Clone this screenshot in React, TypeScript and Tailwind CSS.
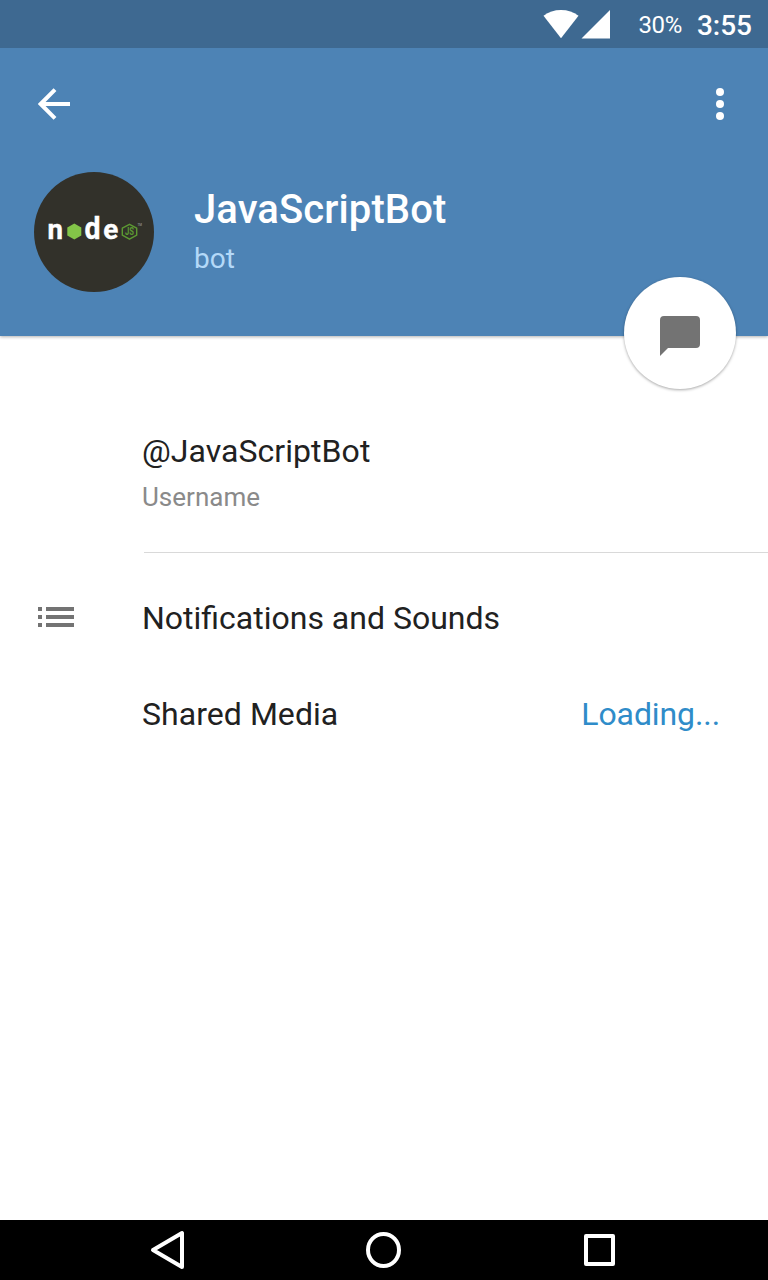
import React from "react";

function StatusBar() {
  return (
    <div className="relative z-10 flex h-12 items-center justify-end bg-[#3e6991] pr-4 text-white">
      <svg width="68" height="30" viewBox="0 0 68 30" className="mr-[28px]" fill="#fff">
        <path d="M0.5 6.800C5.500 2.800 11.300 1 18 1s12.500 1.800 17.500 5.800L18 29.300z" />
        <path d="M67 1v28.500H38.500z" />
      </svg>
      <span className="mr-[15px] mt-0.5 h-8 text-[24px] leading-8 tracking-[-0.4px]">30%</span>
      <span className="mt-1 h-8 text-[28px] font-medium leading-8">3:55</span>
    </div>
  );
}

function NodeLogo() {
  return (
    <svg width="120" height="120" viewBox="0 0 120 120" className="shrink-0">
      <circle cx="60" cy="60" r="60" fill="#32312a" />
      <g fill="#fff" stroke="#fff" strokeWidth="0.4" fontFamily="Roboto, sans-serif" fontWeight="700">
        <text x="13.600" y="66.800" fontSize="28" textLength="15.500" lengthAdjust="spacingAndGlyphs">n</text>
        <text x="50.500" y="67" fontSize="31" textLength="16" lengthAdjust="spacingAndGlyphs">d</text>
        <text x="69.300" y="66.800" fontSize="28" textLength="15" lengthAdjust="spacingAndGlyphs">e</text>
      </g>
      <path d="M40.300 51.500l7 4v8l-7 4-7-4v-8z" fill="#83c548" />
      <path d="M95.500 52.300l7.200 3.900v7l-7.200 4-7.200-4v-7z" fill="none" stroke="#5c9a32" strokeWidth="1.400" strokeLinejoin="round" />
      <text x="91" y="63.200" fontSize="10" fontWeight="700" fontFamily="Roboto, sans-serif" fill="#5c9a32" textLength="9" lengthAdjust="spacingAndGlyphs">JS</text>
      <text x="103.500" y="54" fontSize="3" fontFamily="Roboto, sans-serif" fill="#aaa">TM</text>
    </svg>
  );
}

function ProfileHeader() {
  return (
    <header className="relative h-[288px] bg-[#4d83b5] shadow-[0_1px_3px_rgba(0,0,0,0.3)]">
      <div className="flex h-28 items-center justify-between pl-[38px] pr-11">
        <svg width="32" height="32" viewBox="0 0 32 32" fill="none" stroke="#fff" strokeWidth="4">
          <path d="M32 16H4" />
          <path d="M17 1.700L2.700 16 17 30.300" />
        </svg>
        <svg width="8" height="32" viewBox="0 0 8 32" fill="#fff">
          <circle cx="4" cy="4" r="4" />
          <circle cx="4" cy="16" r="4" />
          <circle cx="4" cy="28" r="4" />
        </svg>
      </div>
      <div className="flex gap-10 pl-[34px] pt-3">
        <NodeLogo />
        <div className="pt-[14px]">
          <h1 className="text-[40px] font-medium leading-[48px] tracking-[0.1px] text-white">JavaScriptBot</h1>
          <p className="mt-[9px] text-[28px] leading-8 text-[#b4d9f8]">bot</p>
        </div>
      </div>
      <button
        aria-label="Send message"
        className="absolute right-8 top-[229px] flex size-28 items-center justify-center rounded-full bg-white pt-1.5 shadow-[0_1px_3px_rgba(0,0,0,0.35)]"
      >
        <svg width="40" height="40" viewBox="0 0 40 40" fill="#737373">
          <path d="M4 0h32a4 4 0 0 1 4 4v24a4 4 0 0 1-4 4H8l-8 8V4a4 4 0 0 1 4-4z" />
        </svg>
      </button>
    </header>
  );
}

function Details() {
  return (
    <main className="flex-1 bg-white text-[32px] leading-10 text-[#212121]">
      <section className="ml-36 h-[217px] border-b border-[#d9d9d9] pt-[95px]">
        <div className="-ml-0.5">
          <p className="tracking-[0.05px]">@JavaScriptBot</p>
          <p className="mt-[10px] text-[26px] leading-8 text-[#8a8a8a]">Username</p>
        </div>
      </section>
      <div className="flex h-24 items-center pl-[38px] pt-[34px]">
        <svg width="36" height="20" viewBox="0 0 36 20" fill="#737373" className="mb-0.5 mr-[68px]">
          <path d="M0 0h4v4H0zM8 0h28v4H8zM0 8h4v4H0zM8 8h28v4H8zM0 16h4v4H0zM8 16h28v4H8z" />
        </svg>
        <span>Notifications and Sounds</span>
      </div>
      <div className="flex h-24 items-center justify-between pl-[142px] pr-12 pt-[34px]">
        <span className="tracking-[0.05px]">Shared Media</span>
        <span className="tracking-[-0.1px] text-[#2f8cc9]">Loading...</span>
      </div>
    </main>
  );
}

function NavigationBar() {
  return (
    <nav className="flex h-[60px] items-center bg-black pl-[150px]">
      <svg width="36" height="40" viewBox="0 0 36 40" fill="none" stroke="#fff" strokeWidth="4" strokeLinejoin="round">
        <path d="M32 3v34L3 20z" />
      </svg>
      <svg width="36" height="36" viewBox="0 0 36 36" fill="none" stroke="#fff" strokeWidth="4" className="ml-[180px]">
        <ellipse cx="17.500" cy="18" rx="15.500" ry="16" />
      </svg>
      <svg width="32" height="32" viewBox="0 0 32 32" fill="none" stroke="#fff" strokeWidth="4" strokeLinejoin="round" className="ml-[182px]">
        <rect x="2" y="2" width="27" height="28" />
      </svg>
    </nav>
  );
}

export default function App() {
  return (
    <div className="flex h-[1280px] w-[768px] flex-col overflow-hidden bg-white font-['Roboto',sans-serif]">
      <StatusBar />
      <ProfileHeader />
      <Details />
      <NavigationBar />
    </div>
  );
}
